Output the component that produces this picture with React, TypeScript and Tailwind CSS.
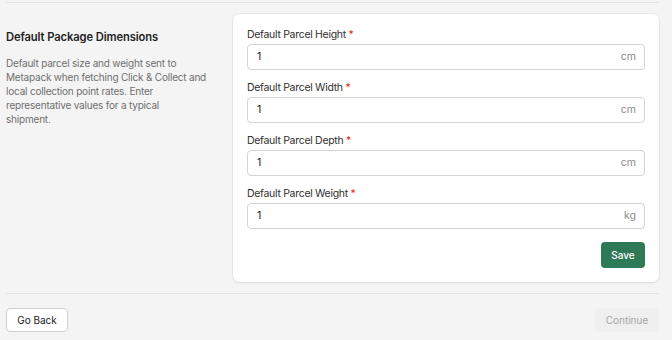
const fields = [
  { label: 'Default Parcel Height', unit: 'cm' },
  { label: 'Default Parcel Width', unit: 'cm' },
  { label: 'Default Parcel Depth', unit: 'cm' },
  { label: 'Default Parcel Weight', unit: 'kg' },
]

function Field({ label, unit }: { label: string; unit: string }) {
  return (
    <div>
      <label className="mb-[1px] block text-[10.5px] leading-4 tracking-[-0.3px] text-[#303030]">
        {label} <span className="text-[#d72c0d]">*</span>
      </label>
      <div className="flex h-[26px] items-center rounded-[4px] border border-[#d4d4d4] bg-white pl-[9px] pr-[8px] text-[10.5px]">
        <input
          className="min-w-0 flex-1 bg-transparent text-[#202020] outline-none"
          defaultValue="1"
        />
        <span className="text-[#8a8a8a]">{unit}</span>
      </div>
    </div>
  )
}

export default function App() {
  return (
    <div
      className="h-[340px] overflow-hidden bg-[#f4f4f4] pl-[6px] pr-[13px]"
      style={{ fontFamily: 'Inter, "Liberation Sans", sans-serif' }}
    >
      <div className="mt-[2px] border-t border-[#e4e4e4]" />
      <div className="flex pt-[11px]">
        <div className="w-[227px] shrink-0 pt-[15px] pr-[8px]">
          <h2 className="text-[11.2px] font-semibold leading-4 tracking-[-0.1px] text-[#222]">
            Default Package Dimensions
          </h2>
          <p className="mt-[11px] text-[10px] leading-[14px] tracking-[-0.2px] text-[#6f6f6f]">
            Default parcel size and weight sent to
            <br />
            Metapack when fetching Click &amp; Collect and
            <br />
            local collection point rates. Enter
            <br />
            representative values for a typical
            <br />
            shipment.
          </p>
        </div>
        <div className="flex-1 rounded-[6px] bg-white px-[14px] pt-[13px] pb-[14px] shadow-[0_0_0_1px_rgba(0,0,0,0.04),0_1px_2px_rgba(0,0,0,0.08)]">
          <div className="flex flex-col gap-[10px]">
            {fields.map((f) => (
              <Field key={f.label} label={f.label} unit={f.unit} />
            ))}
          </div>
          <div className="mt-[13px] flex justify-end">
            <button className="h-[26px] w-[44px] rounded-[4px] bg-[#2f7a56] text-[10px] font-medium text-white">
              Save
            </button>
          </div>
        </div>
      </div>
      <div className="mt-[11px] border-t border-[#e4e4e4]" />
      <div className="flex items-center justify-between pt-[14px]">
        <button className="h-[24px] w-[62px] rounded-[4px] border border-[#cfcfcf] bg-white text-[10px] text-[#222]">
          Go Back
        </button>
        <button className="h-[24px] w-[64px] rounded-[4px] bg-[#efefef] text-[10px] text-[#a6a6a6]">
          Continue
        </button>
      </div>
    </div>
  )
}
